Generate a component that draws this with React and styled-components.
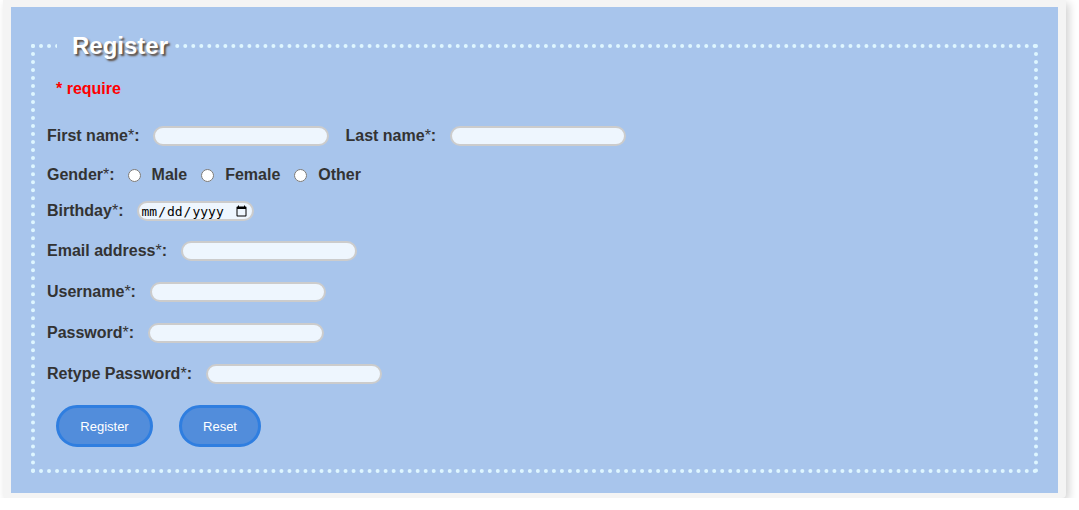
import styled, { createGlobalStyle } from 'styled-components';

const GlobalStyle = createGlobalStyle`
  html, body {
    margin: 0;
    padding: 0;
    background: #ffffff;
  }
  body {
    font-family: "Liberation Sans", Arial, sans-serif;
  }
`;

export default function App() {
  return (
    <>
      <GlobalStyle />
      <Card>
        <Panel>
          <Fieldset>
            <Legend>Register</Legend>
            <Require>* require</Require>
            <Row $top={27}>
              <Label>
                First name<Star>*</Star>:
              </Label>
              <TextInput type="text" $width={176} />
              <Label $left={16}>
                Last name<Star>*</Star>:
              </Label>
              <TextInput type="text" $width={176} />
            </Row>
            <Row $top={19}>
              <Label $gap={13}>
                Gender<Star>*</Star>:
              </Label>
              <Choice>
                <Radio type="radio" name="gender" />
                Male
              </Choice>
              <Choice>
                <Radio type="radio" name="gender" />
                Female
              </Choice>
              <Choice>
                <Radio type="radio" name="gender" />
                Other
              </Choice>
            </Row>
            <Row $top={16}>
              <Label $gap={14}>
                Birthday<Star>*</Star>:
              </Label>
              <DateInput type="date" />
            </Row>
            <Row $top={20}>
              <Label>
                Email address<Star>*</Star>:
              </Label>
              <TextInput type="email" $width={176} />
            </Row>
            <Row $top={21}>
              <Label>
                Username<Star>*</Star>:
              </Label>
              <TextInput type="text" $width={176} />
            </Row>
            <Row $top={21}>
              <Label>
                Password<Star>*</Star>:
              </Label>
              <TextInput type="password" $width={176} />
            </Row>
            <Row $top={21}>
              <Label>
                Retype Password<Star>*</Star>:
              </Label>
              <TextInput type="password" $width={176} />
            </Row>
            <Buttons>
              <Button type="submit" $width={97}>Register</Button>
              <Button type="reset" $width={82}>Reset</Button>
            </Buttons>
          </Fieldset>
        </Panel>
      </Card>
    </>
  );
}

const Card = styled.div`
  width: 1063px;
  margin-left: 3px;
  padding: 7px 8px 5px 8px;
  box-sizing: border-box;
  background: #f4f4f4;
  box-shadow: 3px 3px 8px rgba(0, 0, 0, 0.18);
  border-radius: 0 0 4px 4px;
`;

const Panel = styled.div`
  background: #a8c5ec;
  padding: 25px 20px 20px 20px;
`;

const Fieldset = styled.fieldset`
  margin: 0;
  padding: 0 12px 22px 12px;
  border: 4px dotted #def6ff;
  min-height: 0;
`;

const Legend = styled.legend`
  margin-left: 10px;
  padding: 0 4px 0 15px;
  font-size: 24px;
  font-weight: bold;
  color: #ffffff;
  text-shadow: 2px 2px 2px #5a4a3c;
  line-height: 28px;
`;

const Require = styled.div`
  margin: 19px 0 0 9px;
  color: #ff0000;
  font-size: 16px;
  font-weight: bold;
  line-height: 20px;
`;

const Row = styled.div`
  display: flex;
  align-items: center;
  height: 20px;
  margin-top: ${(p) => p.$top}px;
`;

const Label = styled.label`
  margin-left: ${(p) => p.$left || 0}px;
  margin-right: ${(p) => (p.$gap === undefined ? 14 : p.$gap)}px;
  color: #333333;
  font-size: 16px;
  font-weight: bold;
  white-space: nowrap;
`;

const Star = styled.span`
  font-weight: normal;
`;

const TextInput = styled.input`
  box-sizing: border-box;
  width: ${(p) => p.$width}px;
  height: 20px;
  padding: 0 8px;
  border: 2px solid #cccccc;
  border-radius: 10px;
  background: #eef6fe;
  outline: none;
`;

const DateInput = styled.input`
  box-sizing: border-box;
  width: 117px;
  height: 20px;
  padding: 0 2px 0 1px;
  border: 2px solid #cccccc;
  border-radius: 10px;
  background: #eef6fe;
  font-family: "DejaVu Sans Mono", monospace;
  font-size: 13px;
  color: #000000;
`;

const Choice = styled.label`
  display: flex;
  align-items: center;
  margin-right: 14px;
  color: #333333;
  font-size: 16px;
  font-weight: bold;
`;

const Radio = styled.input`
  width: 13px;
  height: 13px;
  margin: 0 11px 0 0;
`;

const Buttons = styled.div`
  display: flex;
  gap: 26px;
  margin: 21px 0 0 9px;
`;

const Button = styled.button`
  width: ${(p) => p.$width}px;
  height: 42px;
  border: 3px solid #2f7ee0;
  border-radius: 21px;
  background: #528ddb;
  color: #ffffff;
  font-family: "Liberation Sans", Arial, sans-serif;
  font-size: 13px;
`;
